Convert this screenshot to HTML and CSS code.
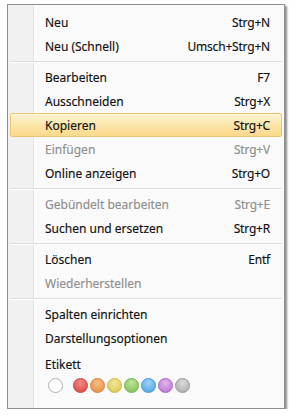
FILE: index.html
```html
<!DOCTYPE html>
<html lang="de">
<head>
<meta charset="utf-8">
<link rel="stylesheet" href="styles.css">
</head>
<body>
<div class="menu">
  <div class="item"><span class="label">Neu</span><span class="key">Strg+N</span></div>
  <div class="item"><span class="label">Neu (Schnell)</span><span class="key">Umsch+Strg+N</span></div>
  <div class="sep"></div>
  <div class="item"><span class="label">Bearbeiten</span><span class="key">F7</span></div>
  <div class="item"><span class="label">Ausschneiden</span><span class="key">Strg+X</span></div>
  <div class="item hover"><span class="label">Kopieren</span><span class="key">Strg+C</span></div>
  <div class="item disabled"><span class="label">Einfügen</span><span class="key">Strg+V</span></div>
  <div class="item"><span class="label">Online anzeigen</span><span class="key">Strg+O</span></div>
  <div class="sep"></div>
  <div class="item disabled"><span class="label">Gebündelt bearbeiten</span><span class="key">Strg+E</span></div>
  <div class="item"><span class="label">Suchen und ersetzen</span><span class="key">Strg+R</span></div>
  <div class="sep"></div>
  <div class="item"><span class="label">Löschen</span><span class="key">Entf</span></div>
  <div class="item disabled"><span class="label">Wiederherstellen</span><span class="key"></span></div>
  <div class="sep"></div>
  <div class="item"><span class="label">Spalten einrichten</span><span class="key"></span></div>
  <div class="item"><span class="label">Darstellungsoptionen</span><span class="key"></span></div>
  <div class="tags">
    <div class="tag-title">Etikett</div>
    <div class="dots">
      <span class="dot none"></span>
      <span class="dot red"></span>
      <span class="dot orange"></span>
      <span class="dot yellow"></span>
      <span class="dot green"></span>
      <span class="dot blue"></span>
      <span class="dot purple"></span>
      <span class="dot gray"></span>
    </div>
  </div>
</div>
</body>
</html>
```
FILE: styles.css
```css
html, body {
  margin: 0;
  padding: 0;
  background: #ffffff;
}
body {
  padding: 4px 0 0 7px;
  font-family: "Noto Sans", "Open Sans", sans-serif;
  font-size: 12px;
  color: #111111;
  -webkit-text-stroke: 0.15px currentColor;
}
.menu {
  width: 276px;
  height: 398px;
  border: 1px solid #8e8e8e;
  background: linear-gradient(to right, #f1f1f1 0, #f1f1f1 25px, #e2e3e3 25px, #e2e3e3 26px, #ffffff 26px, #ffffff 27px, #fafafa 27px);
  box-shadow: 2px 2px 2px rgba(0, 0, 0, 0.45);
  padding-top: 5px;
  box-sizing: content-box;
}
.item {
  height: 24px;
  display: flex;
  align-items: center;
  justify-content: space-between;
  padding: 0 12px 0 35px;
  margin: 0 2px;
  border: 1px solid transparent;
  border-left-width: 0;
  border-right-width: 0;
  box-sizing: border-box;
}
.item .key {
  letter-spacing: -0.2px;
}
.item.hover {
  background: linear-gradient(to bottom, #fdf4d6 0%, #fce7ad 45%, #fbd98a 100%);
  border: 1px solid #e7c574;
  border-radius: 2px;
  padding-left: 34px;
  padding-right: 11px;
}
.item.disabled {
  color: #8f8f8f;
}
.sep {
  height: 7px;
  display: flex;
  flex-direction: column;
  justify-content: center;
  padding: 0 2px;
}
.sep::before {
  content: "";
  display: block;
  height: 1px;
  background: #dcdcdc;
  border-bottom: 1px solid #ffffff;
}
.tags {
  padding: 5px 0 0 37px;
}
.tag-title {
  height: 20px;
  line-height: 20px;
}
.dots {
  display: flex;
  gap: 2px;
  margin-top: 3px;
  align-items: center;
}
.dot {
  width: 15px;
  height: 15px;
  border-radius: 50%;
  box-sizing: border-box;
  display: block;
}
.dot.none {
  background: #ffffff;
  border: 1px solid #b0b0b0;
  margin-left: 3px;
  margin-right: 8px;
}
.dot.red { background: radial-gradient(circle at 50% 30%, #f08a86, #d9443f); border: 1px solid #c9403c; }
.dot.orange { background: radial-gradient(circle at 50% 30%, #f6c187, #e3893a); border: 1px solid #d4823a; }
.dot.yellow { background: radial-gradient(circle at 50% 30%, #f2e79a, #d8c448); border: 1px solid #c9b845; }
.dot.green { background: radial-gradient(circle at 50% 30%, #bde39c, #7dc04e); border: 1px solid #72b04a; }
.dot.blue { background: radial-gradient(circle at 50% 30%, #9fd2f7, #4a9fe2); border: 1px solid #4594d4; }
.dot.purple { background: radial-gradient(circle at 50% 30%, #e3b5f0, #b46ed1); border: 1px solid #a865c4; }
.dot.gray { background: radial-gradient(circle at 50% 30%, #dcdcdc, #a6a6a6); border: 1px solid #999999; }
```
